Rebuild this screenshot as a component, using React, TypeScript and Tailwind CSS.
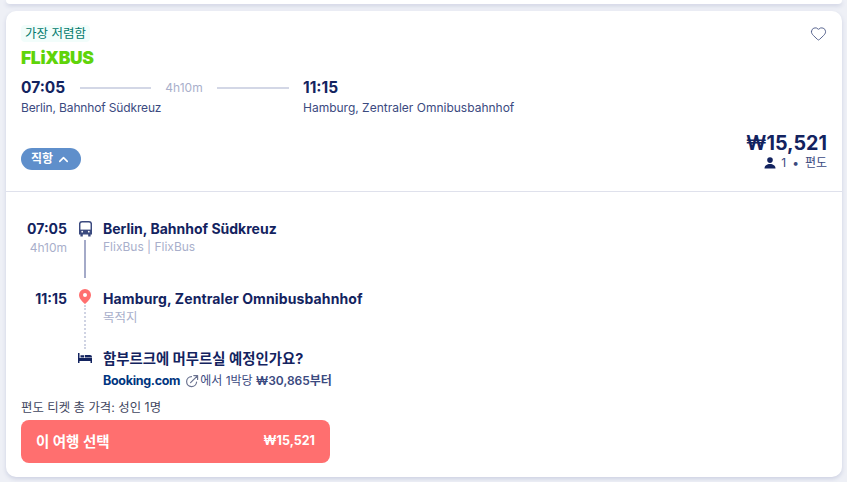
import { ChevronUp, Heart } from "lucide-react";

const font = { fontFamily: '"Inter", "Noto Sans CJK KR", sans-serif' };

function ExternalIcon() {
  return (
    <svg width="14" height="14" viewBox="0 0 14 14" fill="none" stroke="#6b7390" strokeWidth="1.2" strokeLinecap="round" strokeLinejoin="round">
      <path d="M6.5 2.6A5 5 0 1 0 11.6 8" />
      <path d="M5.6 8.6 12.4 1.8M8.8 1.6h3.8v3.8" />
    </svg>
  );
}

function BusIcon() {
  return (
    <svg width="13" height="16" viewBox="0 0 13 16" className="mt-[2px]">
      <path d="M3 .8h7A2.300 2.300 0 0 1 12.300 3.100V12.800H.7V3.100A2.300 2.300 0 0 1 3 .8Z" fill="none" stroke="#3b4a7f" strokeWidth="1.5" />
      <path d="M.7 8.600h11.600V12.800H.7Z" fill="#3b4a7f" />
      <path d="M1.400 12.800h2.400v2.800H1.400ZM9.200 12.800h2.400v2.800H9.200Z" fill="#3b4a7f" />
      <circle cx="3.200" cy="10.700" r=".9" fill="#fff" />
      <circle cx="9.800" cy="10.700" r=".9" fill="#fff" />
    </svg>
  );
}

function PinIcon() {
  return (
    <svg width="12" height="15" viewBox="0 0 12 15">
      <path fillRule="evenodd" d="M6 0a6 6 0 0 1 6 6c0 3.6-3.6 7-6 9-2.400-2-6-5.400-6-9a6 6 0 0 1 6-6Zm0 4a2 2 0 1 0 0 4 2 2 0 0 0 0-4Z" fill="#ff6f6f" />
    </svg>
  );
}

function BedIcon() {
  return (
    <svg width="14" height="10" viewBox="0 0 14 10" className="mt-[4px]">
      <path d="M0 0h1.500v5H14v5h-1.500V8h-11v2H0Z" fill="#13235f" />
      <path d="M2.500 2.200h3.500v2.300H2.500ZM6.800 2h5.200a2 2 0 0 1 2 2v.5H6.800Z" fill="#13235f" />
    </svg>
  );
}

function PersonIcon() {
  return (
    <svg width="12" height="12" viewBox="0 0 12 12" className="mr-[5px]">
      <circle cx="6" cy="3.100" r="2.800" fill="#13235f" />
      <path d="M.5 11.500c0-3 2.500-4.600 5.500-4.600s5.500 1.600 5.500 4.600Z" fill="#13235f" />
    </svg>
  );
}

export default function App() {
  return (
    <div className="h-[482px] w-[847px] overflow-hidden bg-[#eef0f6]" style={font}>
      {/* previous result, only its bottom edge is visible */}
      <div className="ml-[6px] mr-[5px] h-[4px] rounded-b-[10px] bg-white shadow-[0_2px_4px_#cdd1e2]" />

      <div className="ml-[6px] mr-[5px] mt-[7px] flex h-[466px] flex-col rounded-[10px] bg-white shadow-[0_2px_4px_#cdd1e2]">
        <div className="relative h-[181px] shrink-0 border-b border-[#dfe1ec] px-[15px] pt-[14px]">
          <span className="block h-[17px] w-fit rounded-sm bg-[#f2fdfb] px-[4px] text-[12.5px] leading-[17px] text-[#007a6c]">가장 저렴함</span>
          <div className="mt-[6px] h-[19px] text-[17.5px] font-black leading-[19px] tracking-[-0.35px] text-[#5fd40a]">FLiXBUS</div>

          <div className="mt-[11px] flex h-[20px] items-center">
            <span className="w-[59px] text-[15.500px] font-bold text-[#13235f]">07:05</span>
            <span className="h-[2px] w-[71px] bg-[#d3d7e6]" />
            <span className="w-[66px] text-center text-[12px] text-[#a9afcb]">4h10m</span>
            <span className="h-[2px] w-[72px] bg-[#d3d7e6]" />
            <span className="ml-[14px] text-[15.500px] font-bold text-[#13235f]">11:15</span>
          </div>
          <div className="mt-[1px] flex h-[17px] items-center text-[12px] text-[#3b4a7f]">
            <span className="w-[282px] tracking-[-0.15px]">Berlin, Bahnhof Südkreuz</span>
            <span>Hamburg, Zentraler Omnibusbahnhof</span>
          </div>

          <div className="mt-[32px] flex h-[22px] w-[60px] items-center justify-center gap-[3px] rounded-full bg-[#5f8fcb] text-[12px] font-bold text-white">
            직항 <ChevronUp size={15} strokeWidth={2.5} />
          </div>

          <Heart size={17} strokeWidth={1.3} className="absolute right-[15px] top-[14px] text-[#4f5c88]" />
          <div className="absolute right-[15px] top-[120px] flex flex-col items-end">
            <span className="text-[19.700px] font-bold leading-[24px] text-[#13235f]">₩15,521</span>
            <span className="flex h-[16px] items-center text-[12px] text-[#3b4a7f]">
              <PersonIcon />1<span className="mx-[6px]">•</span>편도
            </span>
          </div>
        </div>

        <div className="flex flex-1 flex-col px-[15px] pt-[27px]">
          <div className="flex h-[70px]">
            <div className="flex w-[46px] flex-col items-end">
              <span className="text-[14px] font-bold leading-[19px] text-[#13235f]">07:05</span>
              <span className="mt-[2px] text-[12px] leading-[16px] text-[#a9afcb]">4h10m</span>
            </div>
            <div className="flex w-[36px] flex-col items-center">
              <BusIcon />
              <span className="mt-[3px] h-[38px] w-[2px] bg-[#a4aac8]" />
            </div>
            <div>
              <div className="text-[14px] font-bold leading-[19px] text-[#13235f]">Berlin, Bahnhof Südkreuz</div>
              <div className="text-[12px] leading-[17px] text-[#a9afcb]">FlixBus | FlixBus</div>
            </div>
          </div>

          <div className="flex h-[60px]">
            <span className="w-[46px] text-right text-[14px] font-bold leading-[19px] text-[#13235f]">11:15</span>
            <div className="flex w-[36px] flex-col items-center">
              <PinIcon />
              <span className="mt-[1px] h-[44px] border-l-2 border-dotted border-[#cfd3e3]" />
            </div>
            <div>
              <div className="text-[14px] font-bold leading-[19px] tracking-[0.12px] text-[#13235f]">Hamburg, Zentraler Omnibusbahnhof</div>
              <div className="mt-[1px] text-[12.500px] leading-[17px] text-[#a9afcb]">목적지</div>
            </div>
          </div>

          <div className="flex h-[44px]">
            <span className="w-[46px]" />
            <div className="flex w-[36px] justify-center">
              <BedIcon />
            </div>
            <div>
              <div className="text-[14.400px] font-bold leading-[19px] text-[#13235f]">함부르크에 머무르실 예정인가요?</div>
              <div className="mt-[4px] flex h-[18px] items-center text-[12px] text-[#3b4a7f]">
                <span className="mr-[5px] text-[12.500px] font-bold tracking-[-0.3px] text-[#003580]">Booking.com</span>
                <ExternalIcon />
                <span className="ml-[1px]">에서 1박당 <b className="font-semibold">₩30,865부터</b></span>
              </div>
            </div>
          </div>

          <div className="mt-[6px] text-[12.400px] leading-[17px] text-[#3f4660]">편도 티켓 총 가격: 성인 1명</div>
          <div className="mt-[4px] flex h-[43px] w-[309px] items-center justify-between rounded-[8px] bg-[#ff6f6f] px-[15px] text-white">
            <span className="text-[14.500px] font-bold">이 여행 선택</span>
            <span className="text-[12.500px] font-bold">₩15,521</span>
          </div>
        </div>
      </div>
    </div>
  );
}
